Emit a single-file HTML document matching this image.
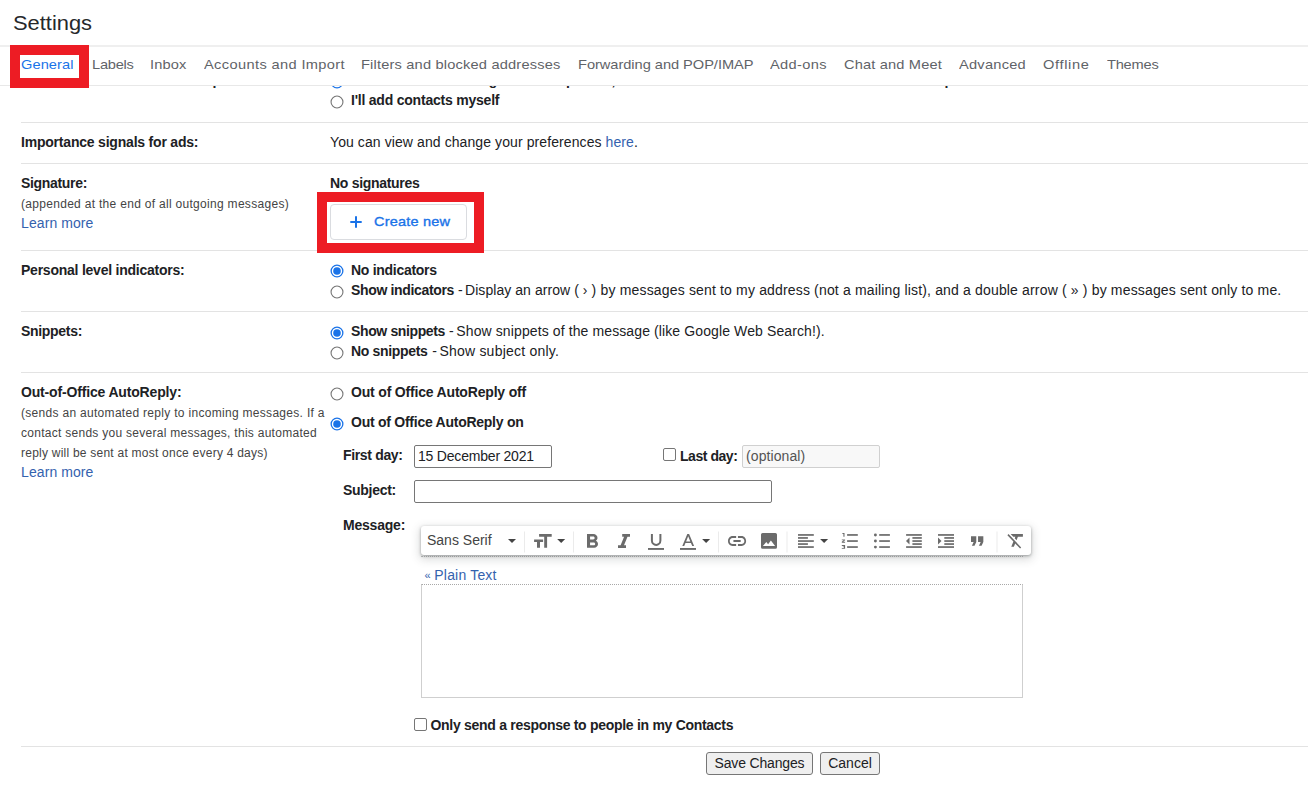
<!DOCTYPE html>
<html>
<head>
<meta charset="utf-8">
<title>Settings</title>
<style>
html,body{margin:0;padding:0;background:#fff;}
body{width:1308px;height:796px;position:relative;overflow:hidden;font-family:"Liberation Sans",sans-serif;color:#202124;}
.a{position:absolute;white-space:nowrap;}
.t{font-size:14px;line-height:16px;letter-spacing:.09px;}
.b{font-size:14px;line-height:16px;font-weight:700;letter-spacing:-.22px;}
.s{font-size:12px;line-height:14px;letter-spacing:.3px;color:#444;}
.l{color:#3462ae;}
.tab{font-size:13.3px;line-height:18px;color:#5f6368;top:56px;transform:scaleX(1.1);transform-origin:0 0;}
.hr{position:absolute;left:21px;right:0;height:1px;background:#e3e3e3;}
.rad{position:absolute;width:11px;height:11px;border:1px solid #767676;border-radius:50%;background:#fff;}
.rad.on{border:1.6px solid #1a73e8;width:9.8px;height:9.8px;}
.rad.on:after{content:"";position:absolute;left:1.9px;top:1.9px;width:6px;height:6px;border-radius:50%;background:#1a73e8;}
.cb{position:absolute;width:11px;height:11px;border:1px solid #767676;border-radius:2px;background:#fff;}
.inp{position:absolute;box-sizing:border-box;border:1px solid #767676;border-radius:2px;background:#fff;}
.btn{position:absolute;box-sizing:border-box;border:1px solid #767676;border-radius:3px;background:#efefef;font-size:14px;line-height:21px;text-align:center;color:#202124;}
.sep{position:absolute;top:6px;width:1px;height:20px;background:#e4e4e4;}
svg{position:absolute;overflow:visible;}
</style>
</head>
<body>

<!-- clipped previous row (only descenders show below the tab bar) -->
<div class="a b" style="left:21px;top:72px;letter-spacing:-.11px;">Create contacts for auto-complete:</div>
<svg style="left:329.5px;top:75.4px;" width="14" height="14" viewBox="0 0 14 14"><circle cx="7" cy="7" r="5.85" fill="#fff" stroke="#1a73e8" stroke-width="1.3"/><circle cx="7" cy="7" r="3.8" fill="#1a73e8"/></svg>
<div class="a b" style="left:351.4px;top:72px;letter-spacing:-.227px;">When I send a message to a new person, add them to Other Contacts so that I can auto-complete to them next time</div>
<div style="position:absolute;left:0;right:0;top:0;height:85.6px;background:#fff;"></div>

<!-- header -->
<div class="a" style="left:13px;top:10px;font-size:21px;line-height:26px;color:#26282b;transform:scaleX(1.042);transform-origin:0 0;">Settings</div>
<div style="position:absolute;left:0;right:0;top:45px;height:2px;background:#efefef;"></div>

<!-- tabs -->
<div style="position:absolute;left:0;right:0;top:85px;height:1px;background:#e8e8e8;"></div>
<div style="position:absolute;left:10px;top:45px;width:79px;height:43px;background:#ed1c24;"></div>
<div style="position:absolute;left:20px;top:55px;width:59px;height:23px;background:#fff;"></div>
<div class="a tab" style="left:21px;letter-spacing:0.060px;color:#1a73e8;">General</div>
<div class="a tab" style="left:91.5px;letter-spacing:-0.229px;">Labels</div>
<div class="a tab" style="left:150px;letter-spacing:0.130px;">Inbox</div>
<div class="a tab" style="left:203.5px;letter-spacing:0.328px;">Accounts and Import</div>
<div class="a tab" style="left:361px;letter-spacing:0.162px;">Filters and blocked addresses</div>
<div class="a tab" style="left:577.5px;letter-spacing:-0.036px;">Forwarding and POP/IMAP</div>
<div class="a tab" style="left:770px;letter-spacing:0.327px;">Add-ons</div>
<div class="a tab" style="left:844px;letter-spacing:0.143px;">Chat and Meet</div>
<div class="a tab" style="left:959px;letter-spacing:0.219px;">Advanced</div>
<div class="a tab" style="left:1043px;letter-spacing:0.582px;">Offline</div>
<div class="a tab" style="left:1106.5px;letter-spacing:-0.205px;">Themes</div>

<!-- row: contacts (partial) -->
<svg style="left:329.5px;top:95.4px;" width="14" height="14" viewBox="0 0 14 14"><circle cx="7" cy="7" r="5.95" fill="#fff" stroke="#757575" stroke-width="1.1"/></svg>
<div class="a b" style="left:351px;top:92px;letter-spacing:-0.217px;">I'll add contacts myself</div>
<div class="hr" style="top:122px;"></div>

<!-- row: importance signals -->
<div class="a b" style="left:21px;top:134px;letter-spacing:-0.205px;">Importance signals for ads:</div>
<div class="a t" style="left:330px;top:134px;">You can view and change your preferences <span class="l">here</span>.</div>
<div class="hr" style="top:163px;"></div>

<!-- row: signature -->
<div class="a b" style="left:21px;top:175px;letter-spacing:-0.323px;">Signature:</div>
<div class="a s" style="left:21px;top:197px;">(appended at the end of all outgoing messages)</div>
<div class="a t l" style="left:21px;top:215px;">Learn more</div>
<div class="a b" style="left:330px;top:175px;letter-spacing:-0.297px;">No signatures</div>
<div class="hr" style="top:250px;"></div>
<div style="position:absolute;left:317px;top:192px;width:167px;height:61px;background:#ed1c24;"></div>
<div style="position:absolute;left:327px;top:202px;width:147px;height:41px;background:#fff;"></div>
<div style="position:absolute;left:330px;top:204px;width:136.5px;height:36px;box-sizing:border-box;border:1px solid #dadce0;border-radius:4px;background:#fff;"></div>
<svg style="left:350px;top:215.9px;" width="12" height="12" viewBox="0 0 12 12"><path d="M6 0.3v11.4M0.3 6h11.4" stroke="#1a73e8" stroke-width="2" fill="none"/></svg>
<div class="a" style="left:374px;top:214px;font-size:13.2px;line-height:16px;color:#1a73e8;letter-spacing:0.191px;-webkit-text-stroke:.35px #1a73e8;transform:scaleX(1.1);transform-origin:0 0;">Create new</div>

<!-- row: personal level indicators -->
<div class="a b" style="left:21px;top:262px;letter-spacing:-0.236px;">Personal level indicators:</div>
<svg style="left:329.5px;top:264.4px;" width="14" height="14" viewBox="0 0 14 14"><circle cx="7" cy="7" r="5.85" fill="#fff" stroke="#1a73e8" stroke-width="1.3"/><circle cx="7" cy="7" r="3.8" fill="#1a73e8"/></svg>
<div class="a b" style="left:351px;top:262px;letter-spacing:-0.282px;">No indicators</div>
<svg style="left:329.5px;top:284.5px;" width="14" height="14" viewBox="0 0 14 14"><circle cx="7" cy="7" r="5.95" fill="#fff" stroke="#757575" stroke-width="1.1"/></svg>
<div class="a b" style="left:351px;top:282px;letter-spacing:-.342px;">Show indicators</div>
<div class="a t" style="left:458.1px;top:282px;">-</div>
<div class="a t" style="left:465px;top:282px;letter-spacing:.06px;">Display an arrow ( › )</div>
<div class="a t" style="left:600.6px;top:282px;letter-spacing:.161px;">by messages sent to my address (not a mailing list), and a double arrow ( » ) by messages sent only to me.</div>
<div class="hr" style="top:311px;"></div>

<!-- row: snippets -->
<div class="a b" style="left:21px;top:323px;letter-spacing:-0.309px;">Snippets:</div>
<svg style="left:329.5px;top:325.6px;" width="14" height="14" viewBox="0 0 14 14"><circle cx="7" cy="7" r="5.85" fill="#fff" stroke="#1a73e8" stroke-width="1.3"/><circle cx="7" cy="7" r="3.8" fill="#1a73e8"/></svg>
<div class="a b" style="left:351px;top:323px;letter-spacing:-.369px;">Show snippets</div>
<div class="a t" style="left:449px;top:323px;">-</div>
<div class="a t" style="left:456.3px;top:323px;letter-spacing:.11px;">Show snippets of the message (like Google Web Search!).</div>
<svg style="left:329.5px;top:345.8px;" width="14" height="14" viewBox="0 0 14 14"><circle cx="7" cy="7" r="5.95" fill="#fff" stroke="#757575" stroke-width="1.1"/></svg>
<div class="a b" style="left:351px;top:343px;letter-spacing:-.33px;">No snippets</div>
<div class="a t" style="left:432.2px;top:343px;">-</div>
<div class="a t" style="left:439.4px;top:343px;letter-spacing:.22px;">Show subject only.</div>
<div class="hr" style="top:372px;"></div>

<!-- row: autoreply -->
<div class="a b" style="left:21px;top:384px;letter-spacing:-0.165px;">Out-of-Office AutoReply:</div>
<div class="a s" style="left:21px;top:405.5px;">(sends an automated reply to incoming messages. If a</div>
<div class="a s" style="left:21px;top:425.5px;letter-spacing:.275px;">contact sends you several messages, this automated</div>
<div class="a s" style="left:21px;top:445.5px;letter-spacing:.235px;">reply will be sent at most once every 4 days)</div>
<div class="a t l" style="left:21px;top:464px;">Learn more</div>

<svg style="left:329.5px;top:386.5px;" width="14" height="14" viewBox="0 0 14 14"><circle cx="7" cy="7" r="5.95" fill="#fff" stroke="#757575" stroke-width="1.1"/></svg>
<div class="a b" style="left:351px;top:384px;letter-spacing:-0.182px;">Out of Office AutoReply off</div>
<svg style="left:329.5px;top:416.8px;" width="14" height="14" viewBox="0 0 14 14"><circle cx="7" cy="7" r="5.85" fill="#fff" stroke="#1a73e8" stroke-width="1.3"/><circle cx="7" cy="7" r="3.8" fill="#1a73e8"/></svg>
<div class="a b" style="left:351px;top:414px;letter-spacing:-0.255px;">Out of Office AutoReply on</div>

<div class="a b" style="left:343px;top:447px;letter-spacing:-0.342px;">First day:</div>
<div class="inp" style="left:414px;top:445px;width:138px;height:23px;"></div>
<div class="a t" style="left:418px;top:448px;letter-spacing:-.2px;">15 December 2021</div>
<div class="cb" style="left:663px;top:448px;"></div>
<div class="a b" style="left:680px;top:448px;letter-spacing:-0.452px;">Last day:</div>
<div class="inp" style="left:742px;top:445px;width:138px;height:23px;border-color:#d0d0d0;background:#f8f8f8;"></div>
<div class="a t" style="left:746px;top:448px;color:#545454;">(optional)</div>

<div class="a b" style="left:343px;top:481.5px;letter-spacing:-0.279px;">Subject:</div>
<div class="inp" style="left:414px;top:480px;width:358px;height:23px;"></div>

<div class="a b" style="left:343px;top:517px;letter-spacing:-0.214px;">Message:</div>

<!-- toolbar -->
<div style="position:absolute;left:421px;top:556px;width:602px;height:0;border-top:1px dotted #c2c2c2;"></div>
<div id="tb" style="position:absolute;left:421px;top:526px;width:610px;height:29px;background:#fff;border-radius:3px;box-shadow:0 1px 3px 0 rgba(40,44,47,.4),0 3px 8px 2px rgba(60,64,67,.17);">
  <div class="a" style="left:6px;top:6px;font-size:14px;line-height:16px;color:#444;">Sans Serif</div>
</div>
<svg id="ic" style="left:421px;top:526px;" width="610" height="29" viewBox="421 526 610 29">
  <g fill="#ebebeb">
    <rect x="524" y="531.5" width="1" height="21"/><rect x="573" y="531.5" width="1" height="21"/>
    <rect x="718" y="531.5" width="1" height="21"/><rect x="786.5" y="531.5" width="1" height="21"/>
    <rect x="996.5" y="531.5" width="1" height="21"/>
  </g>
  <!-- dropdown arrows -->
  <g fill="#444">
    <path d="M508 539h8l-4 4.1z"/>
    <path d="M557.2 539h8l-4 4.1z"/>
    <path d="M702.1 539h8l-4 4.1z"/>
    <path d="M820.1 539h8l-4 4.1z"/>
  </g>
  <g fill="#6b6b6b">
    <!-- text size TT -->
    <path d="M539.1 534.1h12.6v2.7h-4.6v11h-2.9v-11h-5.1z"/>
    <path d="M534.1 539.4h9v2.5h-3.1v5.9h-3v-5.9h-2.9z"/>
    <!-- bold -->
    <svg x="587" y="534.1" width="11" height="13.7" viewBox="7 4 10.75 14" preserveAspectRatio="none"><path d="M15.6 10.79c.97-.67 1.65-1.77 1.65-2.79 0-2.26-1.75-4-4-4H7v14h7.04c2.09 0 3.71-1.7 3.71-3.79 0-1.52-.86-2.82-2.15-3.42zM10 6.5h3c.83 0 1.5.67 1.5 1.5s-.67 1.5-1.5 1.5h-3v-3zm3.500 9H10v-3h3.500c.83 0 1.5.67 1.5 1.500s-.67 1.500-1.500 1.500z"/></svg>
    <!-- italic -->
    <path d="M622.2 534.1h7.800v2.600h-2.500l-3.500 8.500h2v2.700h-8v-2.700h2.600l3.500-8.500h-1.900z"/>
    <!-- underline -->
    <path d="M650.9 534.1h2v6.500a3.250 3.300 0 0 0 6.500 0v-6.500h2v6.500a5.250 5.300 0 0 1-10.500 0z"/>
    <rect x="648" y="548" width="16" height="1.9"/>
    <!-- text colour A -->
    <path d="M687.300 534.100h1.800l5 12h-1.900l-1.250-3.100h-5.500l-1.250 3.100h-1.900zM688.200 536.200l-2.100 5.200h4.200z"/>
    <rect x="680" y="548" width="16" height="1.9"/>
    <!-- link -->
    <svg x="728" y="536" width="18.100" height="9.900" viewBox="2 7 20 10" preserveAspectRatio="none"><path d="M3.900 12c0-1.710 1.390-3.100 3.100-3.100h4V7H7c-2.760 0-5 2.240-5 5s2.240 5 5 5h4v-1.900H7c-1.710 0-3.100-1.390-3.100-3.100zM8 13h8v-2H8v2zm9-6h-4v1.900h4c1.710 0 3.100 1.390 3.100 3.100s-1.390 3.100-3.100 3.100h-4V17h4c2.760 0 5-2.240 5-5s-2.240-5-5-5z"/></svg>
    <!-- image -->
    <path d="M762.600 533h12.800a1.600 1.600 0 0 1 1.600 1.600v12.600a1.600 1.600 0 0 1-1.600 1.600h-12.800a1.600 1.600 0 0 1-1.600-1.600v-12.600a1.600 1.600 0 0 1 1.600-1.600zM762.900 546.100h12.200l-4.200-5.500-2.800 3.600-1.800-2.300z" fill-rule="evenodd"/>
    <!-- align left -->
    <rect x="798" y="534.100" width="15.800" height="1.700"/><rect x="798" y="537.100" width="9.900" height="1.700"/>
    <rect x="798" y="540.200" width="15.800" height="1.700"/><rect x="798" y="543.200" width="9.900" height="1.700"/>
    <rect x="798" y="546.200" width="15.800" height="1.700"/>
    <!-- numbered list -->
    <rect x="847.100" y="534.100" width="10.700" height="1.700"/><rect x="847.100" y="540.200" width="10.700" height="1.700"/><rect x="847.100" y="546.200" width="10.700" height="1.700"/>
    <path d="M842.400 533h2.100v3.700h-1.100v-2.700h-1z"/>
    <path d="M841.800 539.400h3.300v.9l-1.900 1.500h1.900v.9h-3.300v-.9l1.900-1.500h-1.900z"/>
    <path d="M841.800 545.100h3.300v3.700h-3.300v-.9h2.200v-.55h-1.200v-.8h1.200v-.55h-2.200z"/>
    <!-- bullet list -->
    <circle cx="875.400" cy="535" r="1.450"/><circle cx="875.400" cy="541.050" r="1.450"/><circle cx="875.400" cy="547.100" r="1.450"/>
    <rect x="879.200" y="534.100" width="10.700" height="1.700"/><rect x="879.200" y="540.200" width="10.700" height="1.700"/><rect x="879.200" y="546.200" width="10.700" height="1.700"/>
    <!-- outdent -->
    <rect x="906.100" y="534.100" width="15.700" height="1.700"/><rect x="912.400" y="537.100" width="9.400" height="1.700"/>
    <rect x="912.400" y="540.200" width="9.400" height="1.700"/><rect x="912.400" y="543.200" width="9.400" height="1.700"/>
    <rect x="906.100" y="546.200" width="15.700" height="1.700"/>
    <path d="M909.500 537.600v7l-3.500-3.500z"/>
    <!-- indent -->
    <rect x="938" y="534.100" width="16" height="1.700"/><rect x="944.300" y="537.100" width="9.700" height="1.700"/>
    <rect x="944.300" y="540.200" width="9.700" height="1.700"/><rect x="944.300" y="543.200" width="9.700" height="1.700"/>
    <rect x="938" y="546.200" width="16" height="1.700"/>
    <path d="M938 537.600v7l3.500-3.500z"/>
    <!-- quote -->
    <svg x="971" y="536.200" width="14.100" height="9.600" viewBox="5 7 16 10" preserveAspectRatio="none"><path d="M6 17h3l2-4V7H5v6h3zm8 0h3l2-4V7h-6v6h3z"/></svg>
    <!-- remove formatting -->
    <svg x="1007.400" y="534.100" width="15.500" height="14.500" viewBox="2 5 18 16" preserveAspectRatio="none"><path d="M3.270 5L2 6.270l6.970 6.970L6.500 19h3l1.570-3.660L16.730 21 18 19.730 3.550 5.270 3.270 5zM6 5v.18L8.820 8h2.400l-.72 1.680 2.100 2.100L14.210 8H20V5H6z"/></svg>
  </g>
</svg>

<div class="a l" style="left:424.5px;top:566.5px;font-size:11px;line-height:16px;">«</div>
<div class="a t l" style="left:434.3px;top:566.5px;letter-spacing:.19px;">Plain Text</div>
<div style="position:absolute;left:421px;top:584px;width:602px;height:114px;box-sizing:border-box;border:1px solid #cfcfcf;border-top:1px dotted #a8a8a8;background:#fff;"></div>

<div class="cb" style="left:414px;top:717.5px;"></div>
<div class="a b" style="left:430.5px;top:717px;letter-spacing:-0.292px;">Only send a response to people in my Contacts</div>
<div class="hr" style="top:746px;"></div>

<div class="btn" style="left:706px;top:752px;width:107px;height:23px;letter-spacing:-.16px;">Save Changes</div>
<div class="btn" style="left:820px;top:752px;width:60px;height:23px;">Cancel</div>

</body>
</html>
